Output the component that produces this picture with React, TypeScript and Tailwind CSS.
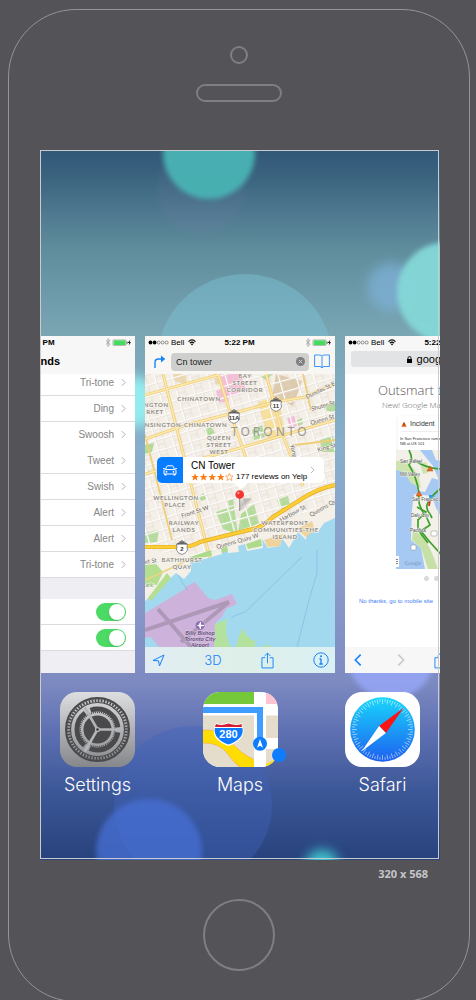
import React from "react";

const SANS = "font-['Liberation_Sans',Arial,sans-serif]";

function Wallpaper() {
  return (
    <svg className="absolute inset-0 h-full w-full" viewBox="40 150 400 710" preserveAspectRatio="xMidYMid slice" aria-hidden="true">
      <defs>
        <linearGradient id="sky" x1="0" y1="0" x2="0" y2="1">
          <stop offset="0" stopColor="#325778" />
          <stop offset="0.04" stopColor="#3b647f" />
          <stop offset="0.09" stopColor="#4f7990" />
          <stop offset="0.14" stopColor="#5f8d9c" />
          <stop offset="0.26" stopColor="#7aa6b4" />
          <stop offset="0.42" stopColor="#87aecb" />
          <stop offset="0.6" stopColor="#8a9cca" />
          <stop offset="0.75" stopColor="#7d8ac1" />
          <stop offset="0.82" stopColor="#5e70b2" />
          <stop offset="0.9" stopColor="#3d5898" />
          <stop offset="1" stopColor="#27427c" />
        </linearGradient>
        <filter id="soft" x="-30%" y="-30%" width="160%" height="160%"><feGaussianBlur stdDeviation="2.5" /></filter>
        <filter id="haze" x="-50%" y="-50%" width="200%" height="200%"><feGaussianBlur stdDeviation="6" /></filter>
      </defs>
      <rect x="40" y="150" width="400" height="710" fill="url(#sky)" />
      <circle cx="201" cy="190" r="44" fill="#7d7fae" opacity="0.1" filter="url(#soft)" />
      <circle cx="209" cy="153" r="46" fill="#4ab3b4" opacity="0.95" filter="url(#soft)" />
      <circle cx="245" cy="362" r="88" fill="#7cc3d6" opacity="0.45" />
      <circle cx="391" cy="287" r="24" fill="#7fb2da" opacity="0.7" filter="url(#haze)" />
      <circle cx="447" cy="292" r="50" fill="#84d8d8" opacity="0.95" filter="url(#soft)" />
      <circle cx="134" cy="402" r="26" fill="#94eaec" filter="url(#haze)" />
      <circle cx="391" cy="655" r="44" fill="#98a8fa" opacity="0.8" filter="url(#soft)" />
      <circle cx="193" cy="805" r="79" fill="#4063bb" opacity="0.4" />
      <circle cx="149" cy="852" r="53" fill="#476fd6" opacity="0.75" filter="url(#soft)" />
      <circle cx="322" cy="867" r="17" fill="#3fc6d2" filter="url(#haze)" />
    </svg>
  );
}

function StatusBar() {
  return (
    <div className="grid h-[13px] grid-cols-[1fr_auto_1fr] items-center pl-[3px] pr-[4px] text-[8px] leading-[12px] text-black">
      <div className="flex items-center gap-[2px]">
        <svg width="21" height="5" viewBox="0 0 21 5" aria-hidden="true">
          <circle cx="2.5" cy="2.5" r="1.9" />
          <circle cx="6.6" cy="2.5" r="1.9" />
          <g fill="none" stroke="#333" strokeWidth="0.5">
            <circle cx="10.7" cy="2.5" r="1.5" />
            <circle cx="14.7" cy="2.5" r="1.5" />
            <circle cx="18.7" cy="2.5" r="1.5" />
          </g>
        </svg>
        <span>Bell</span>
        <svg className="ml-[2px]" width="8" height="7" viewBox="0 0 8 7" aria-hidden="true">
          <path d="M0.5 2.6 Q4 -0.7 7.5 2.6 M1.8 4.1 Q4 2 6.2 4.1" fill="none" stroke="#000" strokeWidth="1.1" />
          <path d="M2.8 5 Q4 4 5.2 5 L4 6.5 Z" />
        </svg>
      </div>
      <span className="font-bold">5:22 PM</span>
      <svg className="justify-self-end" width="26" height="9" viewBox="0 0 26 9" aria-hidden="true">
        <path d="M1 2.5 L5 6.3 L3 8.3 V0.7 L5 2.7 L1 6.5" fill="none" stroke="#999" strokeWidth="0.8" />
        <rect x="8" y="2" width="13" height="5.4" rx="0.8" fill="#fff" stroke="#5b6b5b" strokeWidth="0.5" />
        <rect x="8.7" y="2.4" width="11.8" height="4.6" fill="#43dc5c" />
        <rect x="21.6" y="3.7" width="0.9" height="2" fill="#333" />
        <path d="M25.4 1.6 L22.8 5 H24.3 L23.6 7.6 L26 4.2 H24.6 Z" />
      </svg>
    </div>
  );
}

function Chevron({ className }: { className: string }) {
  return (
    <svg className={className} viewBox="0 0 6 10" aria-hidden="true">
      <path d="M1 1 L5 5 L1 9" fill="none" stroke="currentColor" strokeWidth="1.2" />
    </svg>
  );
}

const sounds = [
  { tone: "Ding", line: true },
  { tone: "Swoosh", line: false },
  { tone: "Tweet", line: true },
  { tone: "Swish", line: true },
  { tone: "Alert", line: true },
  { tone: "Alert", line: true },
  { tone: "Tri-tone", line: true },
];

function ToneRow({ tone, line, first }: { tone: string; line: boolean; first?: boolean }) {
  return (
    <button
      type="button"
      className={`flex w-full items-center justify-end gap-[7px] border-b bg-white pr-[9px] text-[10px] leading-[16px] text-[#858585] ${line ? "border-[#dcdce0]" : "border-white"} ${first ? "h-[22px] pb-[4px]" : "h-[26px]"}`}
    >
      {tone}
      <Chevron className="h-[9px] w-[5px] text-[#b0b0b6]" />
    </button>
  );
}

function Toggle({ label }: { label: string }) {
  return (
    <div className="flex h-[26px] items-center justify-end border-b border-[#dcdce0] bg-white pr-[9px]">
      <input
        type="checkbox"
        defaultChecked
        aria-label={label}
        className="flex h-[18px] w-[30px] appearance-none items-center justify-end rounded-full bg-[#4cd964] pr-px before:h-[16px] before:w-[16px] before:rounded-full before:bg-white before:shadow-sm before:content-['']"
      />
    </div>
  );
}

function SoundsCard() {
  return (
    <section className="flex h-[337px] w-[190px] shrink-0 flex-col bg-[#eeeef3]">
      <div className="h-[38px] bg-[#f7f7f7]">
        <StatusBar />
        <h2 className="text-center text-[11px] font-bold leading-[25px] text-black">Sounds</h2>
      </div>
      <ToneRow tone="Tri-tone" line first />
      {sounds.map((s, i) => (
        <ToneRow key={i} tone={s.tone} line={s.line} />
      ))}
      <div className="mt-[21px]">
        <Toggle label="Lock Sounds" />
        <Toggle label="Keyboard Clicks" />
      </div>
    </section>
  );
}

function Shield({ x, y, label }: { x: number; y: number; label: string }) {
  return (
    <g transform={`translate(${x} ${y})`}>
      <path d="M-5.5 -4 L-3 -4 L-3 -6 L-1 -6 L0 -8 L1 -6 L3 -6 L3 -4 L5.5 -4 Q4.5 -1 5.5 2 Q4 5.5 0 6.5 Q-4 5.5 -5.5 2 Q-4.5 -1 -5.5 -4 Z" fill="#fff" stroke="#777" strokeWidth="0.8" />
      <path d="M-4.8 -4.2 H4.8 M-2.4 -5.6 H2.4" stroke="#666" strokeWidth="1.6" />
      <text x="0" y="3.2" textAnchor="middle" fontSize="6" fontWeight="700" fill="#333">{label}</text>
    </g>
  );
}

function TorontoMap() {
  return (
    <svg className="block h-full w-full" viewBox="145 374 190 273" preserveAspectRatio="xMidYMid slice" role="img" aria-label="Map of Toronto">
      <defs>
        <pattern id="blocks" width="17" height="11" patternUnits="userSpaceOnUse" patternTransform="rotate(-16 145 374)">
          <path d="M0 0.5 H17 M0.5 0 V11" stroke="#ffffff" strokeWidth="1.6" />
          <path d="M0 1.6 H17 M1.6 0 V11 M9 2 V11 M2 6 H9" stroke="#dcd5cc" strokeWidth="0.5" />
        </pattern>
        <filter id="pinshade"><feGaussianBlur stdDeviation="1" /></filter>
      </defs>
      <rect x="145" y="374" width="190" height="273" fill="#f4efe7" />
      <path d="M220 374 H241 L247 391 L228 397 L229 401 L219 403 L216 391 L224 388 Z" fill="#f6bcd8" />
      <path d="M276 374 L302 381 L293 406 L272 397 Z" fill="#decbae" />
      <path d="M258 402 L279 396 L285 437 L268 441 Z" fill="#f8e09c" />
      <path d="M213 374 H220 L223 382 L216 385 Z M173 374 H186 L187 384 L174 381 Z" fill="#ecd9ae" />
      <path d="M287 418 L294 416 L297 426 L290 428 Z" fill="#f6bcd8" />
      <g fill="#b1dc98">
        <path d="M204 430 L211 427 L215 433 L207 436 Z M252 430 L262 425 L265 437 L254 440 Z M297 420 L302 418 L303 424 L298 426 Z M320 440 L333 434 L335 452 H322 Z M325 405 L335 401 V412 L327 411 Z M145 445 L154 443 L152 452 L145 456 Z M258 375 L273 374 L266 380 Z" />
        <path d="M216 512 L234 506 L238 534 L223 529 Z M241 514 L254 504 L259 523 L238 533 Z M277 500 L288 496 L290 505 L282 513 Z M199 496 L204 493 L206 499 L201 501 Z M145 533 L159 530 L157 542 L145 543 Z M228 501 L233 499 L234 505 L229 506 Z" />
      </g>
      <path d="M145 374 H335 V500 L195 560 L145 548 Z" fill="url(#blocks)" />
      <g fill="none" stroke="#efce78" strokeWidth="3" strokeLinejoin="round">
        <path d="M145 395 L218 375 M145 439 L186 425 L245 410 L275 402 L305 397 L335 384 M145 474 L240 448 L335 420 M163 374 L185 461 L213 570 M218 374 L230 412 L247 461 M266 374 L283 436 L303 486" />
        <path d="M303 374 L311 410 M145 435 L172 540 M295 445 L335 440" strokeWidth="1.8" />
      </g>
      <g fill="none" stroke="#fdeab0" strokeWidth="1.4">
        <path d="M145 395 L218 375 M145 439 L186 425 L245 410 L275 402 L305 397 L335 384 M145 474 L240 448 L335 420 M163 374 L185 461 L213 570 M218 374 L230 412 L247 461 M266 374 L283 436 L303 486" />
      </g>
      <path d="M335 518 L324 523 L317 533 L308 527 L306 540 L298 532 L289 548 L282 538 L280 546 L268 548 L262 539 L263 548 L247 551 L245 544 L238 546 L239 552 L228 553 L227 547 L221 548 L222 554 L205 559 L190 561 L191 571 L184 579 L176 573 L145 601 V647 H335 Z" fill="#a2d9ef" />
      <path d="M264 540 L283 534 L280 546 L268 547 Z M297 529 L312 521 L315 530 L306 537 Z" fill="#efd39b" />
      <path d="M246 544 L261 539 L262 546 L248 549 Z M221 548 L227 546 L228 551 L222 553 Z M190 557 L211 550 L212 556 L192 559 Z" fill="#aeda8c" />
      <path d="M145 565 L156 564 L163 572 L157 585 L145 584 Z M167 573 L171 578 L151 601 L148 598 Z" fill="#b4df90" />
      <path d="M145 580 Q168 570 190 559" fill="none" stroke="#eed381" strokeWidth="1.6" />
      <path d="M145 547 H180 Q192 547 200 542 L257 528 Q266 524 273 517 L300 500 Q318 488 335 485" fill="none" stroke="#dfaa26" strokeWidth="4.2" />
      <path d="M145 547 H180 Q192 547 200 542 L257 528 Q266 524 273 517 L300 500 Q318 488 335 485" fill="none" stroke="#fccd35" strokeWidth="2.8" />
      <path d="M145 613 L185 589 V587 L195 582 L208 598 L215 600 L232 594 L237 604 L226 609 L222 617 L216 622 L214 647 H159 L151 637 L145 638 Z" fill="#cdb3dc" />
      <path d="M145 630 L229 602 M158 609 L191 647 M229 602 L181 642" fill="none" stroke="#ae98b7" strokeWidth="4" />
      <path d="M215 624 L227 619 Q224 635 231 647 H214 Z M236 647 Q238 637 243 628 Q246 638 255 641 V647 Z M261 647 L267 645 L273 647 Z" fill="#b3e29f" />
      <path d="M231 618 Q235 615 245 612 L302 557 M317 550 L317 573 L309 600 L297 647 M178 575 L187 590" fill="none" stroke="#77b7df" strokeWidth="0.6" />
      <g className="font-['Lato',sans-serif] tracking-widest" fill="#8f8c88" fontSize="6" fontWeight="700" textAnchor="middle" stroke="#f8f4ed" strokeWidth="1" paintOrder="stroke">
        <text x="245" y="378">BAY</text><text x="245" y="385">STREET</text><text x="245" y="392">CORRIDOR</text>
        <text x="199" y="401">CHINATOWN</text>
        <text x="155" y="407">INGTON</text><text x="155" y="414">RKET</text>
        <text x="186" y="427">NSINGTON-CHINATOWN</text>
        <text x="219" y="440">QUEEN</text><text x="219" y="447">STREET</text><text x="219" y="454">WEST</text>
        <text x="176" y="500">WELLINGTON</text><text x="175" y="507">PLACE</text>
        <text x="184" y="525">RAILWAY</text><text x="184" y="532">LANDS</text>
        <text x="285" y="525">WATERFRONT</text><text x="286" y="532">COMMUNITIES-THE</text><text x="285" y="539">ISLAND</text>
        <text x="182" y="562">BATHHURST</text><text x="182" y="569">QUAY</text>
      </g>
      <text className="font-['Noto_Sans',sans-serif] tracking-[0.25em]" x="231" y="436" fill="#9a9793" fontSize="12">TORONTO</text>
      <g className="font-['Lato',sans-serif]" fill="#6b6762" fontSize="6" stroke="#faf6ee" strokeWidth="0.8" paintOrder="stroke">
        <text transform="translate(307 399) rotate(-26)">Dundas St E</text>
        <text transform="translate(312 411) rotate(-16)">Shuter St</text>
        <text transform="translate(311 425) rotate(-16)">Queen St</text>
        <text transform="translate(318 452) rotate(-16)">King St</text>
        <text transform="translate(290 445) rotate(75)">Yonge</text>
        <text transform="translate(182 518) rotate(-18)">Front St W</text>
        <text transform="translate(281 522) rotate(-29)">Harbour St</text>
        <text transform="translate(311 517) rotate(-30)">Queens Qu</text>
        <text transform="translate(217 549) rotate(-16)">Queens Quay W</text>
        <text transform="translate(145 564) rotate(-8)">et St</text>
        <text x="145" y="587" fill="#5d9a54">ark</text>
      </g>
      <Shield x={234} y={417} label="11A" />
      <Shield x={276} y={405} label="11" />
      <Shield x={182} y={548} label="2" />
      <circle cx="200" cy="625.5" r="5" fill="#8c72b0" stroke="#d8c6e4" strokeWidth="0.7" />
      <path d="M196.5 625.5 L199 624.8 L200 622 H201 L200.8 624.8 L204 625 V626 L200.8 626.2 L201 629 H200 L199 626.2 Z" fill="#fff" />
      <g className="font-['Lato',sans-serif]" fill="#5f4a75" fontSize="6" fontWeight="700" fontStyle="italic" textAnchor="middle" stroke="#dfcfe8" strokeWidth="0.8" paintOrder="stroke">
        <text x="200" y="635">Billy Bishop</text>
        <text x="200" y="641">Toronto City</text>
        <text x="200" y="647">Airport</text>
      </g>
      <path d="M240 509 L250 499 L244 499 Z" stroke="#555" strokeWidth="3" opacity="0.3" filter="url(#pinshade)" />
      <path d="M239.7 497 V511" stroke="#999" strokeWidth="1.3" />
      <circle cx="239.7" cy="494.5" r="4.3" fill="#f5342d" />
      <circle cx="238.3" cy="493" r="1.2" fill="#ff9b94" />
    </svg>
  );
}

function Stars() {
  const star = "M4 0.3 L5.05 2.9 L7.8 3.05 L5.7 4.8 L6.4 7.5 L4 6 L1.6 7.5 L2.3 4.8 L0.2 3.05 L2.95 2.9 Z";
  return (
    <svg width="42" height="8" viewBox="0 0 42 8" role="img" aria-label="4 of 5 stars">
      {[0, 1, 2, 3, 4].map((n) => (
        <path key={n} d={star} transform={`translate(${n * 8.6} 0)`} fill={n < 4 ? "#ff7a12" : "none"} stroke="#ff7a12" strokeWidth={n < 4 ? 0 : 0.6} />
      ))}
    </svg>
  );
}

function ShareIcon({ className }: { className: string }) {
  return (
    <svg className={className} viewBox="0 0 14 18" aria-hidden="true">
      <path d="M4.5 6 H1 V17 H13 V6 H9.5 M7 12 V1.2 M3.8 4.2 L7 1 L10.2 4.2" fill="none" stroke="#1683fb" strokeWidth="1" />
    </svg>
  );
}

function MapsCard() {
  return (
    <section className="flex h-[337px] w-[190px] shrink-0 flex-col bg-[#f8f7f3]">
      <StatusBar />
      <div className="flex h-[25px] items-center gap-[5px] pl-[8px] pr-[5px]">
        <button type="button" aria-label="Directions">
          <svg width="13" height="14" viewBox="0 0 13 14">
            <path d="M2 13 V7.5 Q2 4 5.5 4 H9" fill="none" stroke="#1683fb" strokeWidth="1.4" />
            <path d="M8 0.5 L12.3 4 L8 7.5 Z" fill="#1683fb" />
          </svg>
        </button>
        <label className="flex h-[18px] min-w-0 flex-1 items-center rounded-[4px] bg-[#cfcfcd] pl-[5px] pr-[4px]">
          <input type="text" aria-label="Search" defaultValue="Cn tower" className="min-w-0 flex-1 bg-transparent text-[9px] leading-[14px] text-[#222]" />
          <svg width="9" height="9" viewBox="0 0 9 9" aria-hidden="true">
            <circle cx="4.5" cy="4.5" r="4.5" fill="#7e7e82" />
            <path d="M2.8 2.8 L6.2 6.2 M6.2 2.8 L2.8 6.2" stroke="#d8d8d6" strokeWidth="0.9" />
          </svg>
        </label>
        <button type="button" aria-label="Bookmarks">
          <svg width="16" height="15" viewBox="0 0 16 15">
            <path d="M8 2.2 Q7.5 1 5.5 1 H0.6 V12.5 H6 Q7.5 12.5 8 14 Q8.5 12.5 10 12.5 H15.4 V1 H10.5 Q8.5 1 8 2.2 V14" fill="none" stroke="#2288f8" strokeWidth="0.9" />
          </svg>
        </button>
      </div>
      <div className="relative min-h-0 flex-1">
        <TorontoMap />
        <div className="absolute left-[12px] right-[11px] top-[83px]">
          <button type="button" className="flex h-[26px] w-full items-stretch overflow-hidden rounded-[5px] bg-white text-left">
            <span className="flex w-[26px] items-center justify-center bg-[#087cff]">
              <svg width="14" height="11" viewBox="0 0 14 11" aria-hidden="true">
                <path d="M2.5 4.6 L3.6 1.5 Q3.8 0.8 4.6 0.8 H9.4 Q10.2 0.8 10.4 1.5 L11.5 4.6 M1 9 V5.7 Q1 4.6 2.5 4.6 H11.5 Q13 4.6 13 5.7 V9 Z" fill="none" stroke="#fff" strokeWidth="1" />
                <path d="M1.5 9 V10.5 H3.5 V9 M10.5 9 V10.5 H12.5 V9" fill="#fff" />
                <circle cx="3.5" cy="6.8" r="0.9" fill="#fff" />
                <circle cx="10.5" cy="6.8" r="0.9" fill="#fff" />
                <path d="M0 3.6 H1.8 M12.2 3.6 H14" stroke="#fff" />
              </svg>
            </span>
            <span className="flex flex-1 flex-col justify-center pl-[8px] text-black">
              <span className="text-[10px] leading-[13px]">CN Tower</span>
              <span className="flex items-center gap-[3px] whitespace-nowrap text-[8px] leading-[10px]">
                <Stars />
                177 reviews on Yelp
              </span>
            </span>
            <Chevron className="mr-[9px] h-[8px] w-[5px] self-center text-[#b5b5ba]" />
          </button>
          <svg className="mx-auto h-[6px] w-[14px]" viewBox="0 0 14 6" aria-hidden="true">
            <path d="M0 0 H14 L7 6 Z" fill="#fff" />
          </svg>
        </div>
      </div>
      <div className="flex h-[26px] items-center justify-between bg-linear-to-r from-[#e2edf3] via-[#deefe9] to-[#daf0f4] pl-[7px] pr-[6px]">
        <button type="button" aria-label="Current location">
          <svg width="13" height="13" viewBox="0 0 13 13">
            <path d="M1 6.5 L12 1 L7.5 12 L6.5 6.8 Z" fill="none" stroke="#1683fb" strokeWidth="1" />
          </svg>
        </button>
        <button type="button" className="pl-[14px] font-['Inter',sans-serif] text-[13px] font-light leading-[16px] text-[#1683fb]">3D</button>
        <button type="button" aria-label="Share" className="pl-[14px]">
          <ShareIcon className="h-[17px] w-[13px]" />
        </button>
        <button type="button" aria-label="Info" className="pl-[14px]">
          <svg width="16" height="16" viewBox="0 0 16 16">
            <circle cx="8" cy="8" r="7.2" fill="none" stroke="#1683fb" />
            <path d="M8 6.7 V12 M6.5 7 H8 M6.3 12 H9.7" stroke="#1683fb" strokeWidth="1.3" />
            <circle cx="8" cy="4.3" r="1" fill="#1683fb" />
          </svg>
        </button>
      </div>
    </section>
  );
}

function TrafficMap() {
  return (
    <svg className="block h-[119px] w-[98px]" viewBox="396 450 98 119" role="img" aria-label="San Francisco traffic">
      <rect x="396" y="450" width="98" height="119" fill="#a6c9f4" />
      <path d="M396 450 H420 L433 466 L439 480 L432 478 L425 492 L419 491 L411 476 L396 466 Z" fill="#f2f0e8" />
      <path d="M396 461 L406 460 L418 474 L421 488 L411 483 L404 472 L396 470 Z M420 464 L426 462 L429 472 L423 474 Z" fill="#cfe3ae" />
      <path d="M494 450 H432 L436 460 L446 462 L450 569 H494 Z M414 494 L432 496 L436 508 L450 532 V569 H425 L421 548 L411 540 L412 510 Z" fill="#f3f0e8" />
      <path d="M413 530 L424 537 L432 553 L438 569 H428 L421 548 L412 540 Z" fill="#c6e0a6" />
      <g fill="none" stroke="#3f9f2c" strokeWidth="1.7">
        <path d="M409 450 Q414 460 409 465 Q417 478 419 493 M414 460 Q425 468 440 469 M419 494 Q417 506 426 516 L430 525 L421 531 L429 541 L446 560 M434 496 Q422 505 430 514 L432 518 M440 489 L430 498 M418 519 V530 L428 543" />
        <path d="M417 507 L426 512 L418 520" />
      </g>
      <path d="M430 500 L429 506" stroke="#d43a22" strokeWidth="1.8" />
      <path d="M427 471 L430 466 L433 471 Z M416 496 L419 491 L422 496 Z" fill="#ea6b22" stroke="#b84a14" strokeWidth="0.5" />
      <rect x="429" y="495" width="4" height="4" fill="#269fd8" />
      <g className="font-['Liberation_Sans',Arial,sans-serif]" fontSize="4.5" fill="#444" stroke="#fff" strokeWidth="0.6" paintOrder="stroke">
        <text x="400" y="463">San Rafael</text>
        <text x="400" y="476">Mill Valley</text>
        <text x="412" y="501">San Francisco</text>
        <text x="411" y="517">Daly City</text>
        <text x="410" y="532">Pacifica</text>
      </g>
      <rect x="431" y="531" width="6" height="5" rx="1" fill="#fff" stroke="#888" strokeWidth="0.5" />
      <rect x="411" y="545" width="5" height="5" rx="1" fill="#fff" stroke="#888" strokeWidth="0.5" />
      <rect x="396" y="556" width="3" height="11" fill="#fff" />
      <path d="M396 559.5 H398 M396 561.5 H398 M396 563.5 H398" stroke="#666" strokeWidth="0.8" />
      <text className="font-['Liberation_Serif',serif]" x="405" y="565" fontSize="5.5" fill="#7b93b5">Google</text>
    </svg>
  );
}

function Warning({ className }: { className: string }) {
  return (
    <svg className={className} viewBox="0 0 6 6" aria-hidden="true">
      <path d="M0.3 5.7 L3 0.5 L5.7 5.7 Z" fill="#e8651a" />
      <path d="M3 2.2 V4.2" stroke="#50200a" strokeWidth="0.8" />
    </svg>
  );
}

function SafariCard() {
  return (
    <section className="flex h-[337px] w-[190px] shrink-0 flex-col bg-white">
      <div className="h-[38px] bg-[#f7f7f7]">
        <StatusBar />
        <div className="mx-[6px] mt-[2px] flex h-[16px] items-center justify-center gap-[5px] rounded-[3px] bg-[#e2e3e5] text-[11px] leading-[16px] text-black">
          <svg width="5" height="7" viewBox="0 0 5 7" aria-hidden="true">
            <rect x="0" y="3" width="5" height="4" />
            <path d="M1 3 V1.8 Q1 0.6 2.5 0.6 Q4 0.6 4 1.8 V3" fill="none" stroke="#000" strokeWidth="0.9" />
          </svg>
          google.com
        </div>
      </div>
      <div className="min-h-0 flex-1 whitespace-nowrap font-['Open_Sans',sans-serif] font-light">
        <h2 className="pl-[33px] pt-[7px] text-[13px] leading-[18px] text-[#555]">Outsmart traffic</h2>
        <p className="pl-[37px] text-[8px] leading-[12px] text-[#666]">New! Google Maps</p>
        <div className="ml-[51px] mt-[5px] w-[98px]">
          <div className="ml-[2px] flex h-[34px] flex-col bg-white shadow">
            <p className="ml-[3px] flex h-[16px] items-center gap-[3px] border-b border-[#eee] text-[7px] leading-[8px] text-[#333]">
              <Warning className="h-[6px] w-[6px]" />
              <span className="font-['Liberation_Sans',Arial,sans-serif]">Incident</span>
            </p>
            <p className="pl-[2px] pt-[4px] font-['Liberation_Sans',Arial,sans-serif] text-[4px] leading-[5px] text-[#333]">
              In San Francisco ramps
              <br />
              NB at US 101
            </p>
          </div>
          <TrafficMap />
        </div>
        <div className="mt-[7px] flex justify-center gap-[5px] pr-[8px]" aria-hidden="true">
          <i className="h-[5px] w-[5px] rounded-full bg-[#d9d9d9]" />
          <i className="h-[5px] w-[5px] rounded-full bg-[#d9d9d9]" />
          <i className="h-[5px] w-[5px] rounded-full bg-[#d9d9d9]" />
        </div>
        <a href="#mobile" className="ml-[14px] mt-[15px] inline-block font-['Liberation_Sans',Arial,sans-serif] text-[6px] leading-[10px] text-[#3d7cf2]">No thanks, go to mobile site</a>
      </div>
      <div className="flex h-[26px] items-center bg-[#f7f7f7] pl-[9px]">
        <button type="button" aria-label="Back">
          <Chevron className="h-[14px] w-[8px] rotate-180 text-[#1683fb]" />
        </button>
        <button type="button" aria-label="Forward" className="ml-[35px]">
          <Chevron className="h-[14px] w-[8px] text-[#c9c9cc]" />
        </button>
        <button type="button" aria-label="Share" className="ml-[29px]">
          <ShareIcon className="h-[17px] w-[13px]" />
        </button>
      </div>
    </section>
  );
}

function SettingsIcon() {
  return (
    <svg className="h-[75px] w-[75px]" viewBox="0 0 75 75" aria-hidden="true">
      <defs>
        <linearGradient id="metal" x1="0" y1="0" x2="0" y2="1">
          <stop offset="0" stopColor="#dddee0" />
          <stop offset="1" stopColor="#85878b" />
        </linearGradient>
      </defs>
      <rect width="75" height="75" rx="17" fill="url(#metal)" />
      <g fill="none" stroke="#4a4a4c">
        <circle cx="37.5" cy="37.5" r="31.4" strokeWidth="2.2" />
        <circle cx="37.5" cy="37.5" r="29" strokeWidth="3" strokeDasharray="1.7 1.337" />
        <circle cx="37.5" cy="37.5" r="27" strokeWidth="1.2" />
        <circle cx="37.5" cy="37.5" r="20.5" strokeWidth="5" strokeDasharray="36.9 6.033" strokeDashoffset="-3" />
        <circle cx="37.5" cy="37.5" r="17.3" strokeWidth="1.6" strokeDasharray="1 1.013" />
      </g>
      <circle cx="37.5" cy="37.5" r="14" fill="#4a4a4c" />
      <path d="M37.500 37.500 H63 M37.500 37.500 L24.700 15.300 M37.500 37.500 L24.700 59.700" stroke="#b3b5b8" strokeWidth="2.600" />
      <circle cx="37.5" cy="37.5" r="2.6" fill="#b3b5b8" />
      <circle cx="37.5" cy="37.5" r="1.2" fill="#333" />
    </svg>
  );
}

function MapsIcon() {
  return (
    <svg className="h-[75px] w-[75px]" viewBox="0 0 75 75" aria-hidden="true">
      <defs><clipPath id="tile"><rect width="75" height="75" rx="17" /></clipPath></defs>
      <g clipPath="url(#tile)">
        <rect width="75" height="75" fill="#fff" />
        <rect width="51" height="12" fill="#76c83b" />
        <rect x="63" width="12" height="12" fill="#fcc4d0" />
        <path d="M0 23.500 H51 V75 H0 Z M63 23.500 H75 V46 H63 Z M63 57 H75 V75 H63 Z" fill="#e4ddcb" />
        <path d="M-1 38 Q17 37 25 46 Q37 62 52 68 V76 H38 Q30 70 24 61 Q15 50 -1 51 Z" fill="#ffdd03" stroke="#f0aa4b" strokeWidth="0.6" />
        <path d="M63 72 L75 66 V75 H63 Z" fill="#ffdd03" />
        <rect x="51" y="12" width="12" height="63" fill="#fff" />
        <path d="M0 15 H60 V52 H54 V21 H0 Z" fill="#419cff" />
        <circle cx="57" cy="51.7" r="7" fill="#0d7cff" />
        <path d="M57 47 L60 55.8 L57 53.8 L54 55.8 Z" fill="#fff" />
        <path d="M13 31 Q17 33.500 25.500 30.500 Q34 33.500 38.500 31 Q43 40 38 46 Q34 51 25.500 54 Q17 51 13 46 Q8.500 40 13 31 Z" fill="#fff" />
        <path d="M13 32 Q19 34 25.500 31.500 Q33 34 38.500 32 L39 35 H12 Z" fill="#d32035" />
        <path d="M11.800 36 H39.500 Q40.500 42 37 45.500 Q33 50 25.500 52.500 Q18 50 14.500 45.500 Q11 42 11.800 36 Z" fill="#0d7cff" />
        <text x="25.5" y="46" textAnchor="middle" fontSize="11" fontWeight="700" fill="#fff">280</text>
      </g>
    </svg>
  );
}

function SafariIcon() {
  const ticks = Array.from({ length: 72 }, (_, i) => i);
  return (
    <svg className="h-[75px] w-[75px]" viewBox="0 0 75 75" aria-hidden="true">
      <defs>
        <linearGradient id="dial" x1="0" y1="0" x2="0" y2="1">
          <stop offset="0" stopColor="#19d6fb" />
          <stop offset="1" stopColor="#1d60f0" />
        </linearGradient>
      </defs>
      <rect width="75" height="75" rx="17" fill="#fff" />
      <circle cx="37.5" cy="37.5" r="32.3" fill="url(#dial)" />
      <g stroke="#fff" strokeWidth="0.6" opacity="0.85">
        {ticks.map((i) => (
          <path key={i} d={i % 2 ? "M37.5 7 V9.8" : "M37.5 7 V12"} transform={`rotate(${i * 5} 37.5 37.5)`} />
        ))}
      </g>
      <path d="M58.500 16 L40.900 41.100 L34.100 34.100 Z" fill="#fb1414" />
      <path d="M16.500 59.500 L34.100 34.100 L40.900 41.100 Z" fill="#fff" />
    </svg>
  );
}

function AppButton({ name, children }: { name: string; children: React.ReactNode }) {
  return (
    <a href={`#${name.toLowerCase()}`} className="relative flex w-[75px] flex-col items-center gap-[6px]">
      {children}
      <span className="font-['Inter',sans-serif] text-[18px] font-light leading-[24px] text-white">{name}</span>
    </a>
  );
}

export default function App() {
  return (
    <main className={`h-screen overflow-hidden bg-[#545357] pt-[9px] ${SANS}`}>
      <div className="ml-[8px] mr-[6px] flex flex-col rounded-[68px] border border-[#949397] pb-[30px] pt-[36px]">
        <div className="h-[18px] w-[18px] self-center rounded-full border-2 border-[#7f7e82]" />
        <div className="mt-[20px] h-[18px] w-[86px] self-center rounded-full border-2 border-[#7f7e82]" />
        <div className="relative ml-[31px] mr-[29px] mt-[48px] overflow-hidden pb-[63px] pt-[186px]">
          <Wallpaper />
          <div className="relative flex justify-center gap-[10px]">
            <SoundsCard />
            <MapsCard />
            <SafariCard />
          </div>
          <nav className="relative mt-[19px] flex justify-between px-[20px]">
            <AppButton name="Settings"><SettingsIcon /></AppButton>
            <AppButton name="Maps">
              <MapsIcon />
              <i className="absolute -right-[8px] top-[56px] h-[14px] w-[14px] rounded-full bg-[#0d7cff]" />
            </AppButton>
            <AppButton name="Safari"><SafariIcon /></AppButton>
          </nav>
          <div className="pointer-events-none absolute bottom-px left-0 right-px top-0 border border-[#c9cccf]" />
        </div>
        <p className="mr-[41px] mt-[6px] self-end font-['Open_Sans',sans-serif] text-[11px] font-bold leading-[16px] text-[#c6c5c8]">320 x 568</p>
        <button type="button" aria-label="Home" className="mt-[17px] h-[72px] w-[72px] self-center rounded-full border-2 border-[#7f7e82]" />
      </div>
    </main>
  );
}
